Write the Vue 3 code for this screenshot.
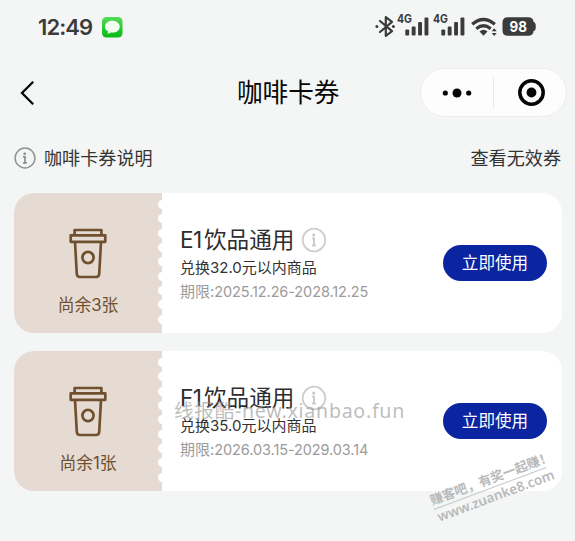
<script setup>
const coupons = [
  { id: 1, left: 3, code: 'E1', value: '32.0', range: '2025.12.26-2028.12.25' },
  { id: 2, left: 1, code: 'F1', value: '35.0', range: '2026.03.15-2029.03.14' },
]
const holes = [0, 1, 2, 3, 4, 5, 6, 7, 8]
</script>

<template>
  <main class="page">
    <header class="status">
      <span class="time">12:49</span>
      <svg class="msg" width="21" height="21" viewBox="0 0 21 21">
        <defs>
          <linearGradient id="green" x1="0" y1="0" x2="0" y2="1">
            <stop offset="0" stop-color="#55dc58" />
            <stop offset="1" stop-color="#08b814" />
          </linearGradient>
        </defs>
        <rect width="20.5" height="20.5" rx="4.5" fill="url(#green)" />
        <path d="M10.3 3.8c-4.200 0-7.300 2.600-7.300 5.900 0 2.100 1.300 3.900 3.300 4.900-.1.800-.5 1.500-1.100 2 1.500 0 2.700-.6 3.500-1.200 5 .8 9-1.800 9-5.700 0-3.300-3.200-5.900-7.400-5.900z" fill="#f4fff4" />
      </svg>
      <svg class="signals" width="167" height="26" viewBox="0 0 167 26">
        <g fill="none" stroke="#3b3b3b" stroke-width="2.200" stroke-linejoin="round" stroke-linecap="round">
          <path d="M5 8l12 10.200-6.200 4.600V4.200l6.200 4.600L5 19" />
        </g>
        <g fill="#3b3b3b">
          <circle cx="1.900" cy="13.500" r="1.500" />
          <circle cx="18.400" cy="13.500" r="1.500" />
          <g v-for="x in [0, 36]" :key="x" :transform="`translate(${x} 0)`">
            <text x="22" y="10.300" class="net" textLength="15" lengthAdjust="spacingAndGlyphs">4G</text>
            <rect x="30.300" y="16.500" width="3.900" height="6" rx="1" />
            <rect x="36.700" y="13.500" width="3.900" height="9" rx="1" />
            <rect x="43.100" y="9" width="3.900" height="13.500" rx="1" />
            <rect x="49.500" y="4.500" width="3.900" height="18" rx="1" />
          </g>
          <path d="M104.500 18.500q4-3.400 8 0l-4 4.300z" />
          <path d="M119.200 15.200l2.500 3h-5zM119.200 23l2.500-3h-5z" />
          <path d="M133 4.300h20q5.500 0 5.500 4.700 2.300 0 2.300 4.500t-2.300 4.500q0 4.800-5.500 4.800h-20q-5.500 0-5.500-5.300V9.500q0-5.200 5.500-5.200z" />
        </g>
        <g fill="none" stroke="#3b3b3b" stroke-width="3.300">
          <path d="M97.200 11.200q11.300-9.400 22.600 0" />
          <path d="M101.300 15.700q7.200-5.800 14.400 0" />
        </g>
        <text x="134.500" y="18.900" class="battery" textLength="17.500" lengthAdjust="spacingAndGlyphs">98</text>
      </svg>
    </header>

    <nav class="nav">
      <svg class="back" width="16" height="28" viewBox="0 0 16 28">
        <path d="M13.200 2.800L2 14l11.200 11.300" fill="none" stroke="#080808" stroke-width="2.300" />
      </svg>
      <h1>咖啡卡券</h1>
      <div class="capsule">
        <svg width="30" height="12" viewBox="0 0 30 12" fill="#050505">
          <circle cx="3.300" cy="6" r="2.600" /><circle cx="15" cy="6" r="4.500" /><circle cx="26.700" cy="6" r="2.600" />
        </svg>
        <i class="divider"></i>
        <svg width="28" height="28" viewBox="0 0 28 28">
          <circle cx="14.500" cy="13.500" r="11.700" fill="none" stroke="#050505" stroke-width="3.500" />
          <circle cx="14.500" cy="13.500" r="4.900" fill="#050505" />
        </svg>
      </div>
    </nav>

    <div class="links">
      <svg width="22" height="22" viewBox="0 0 22 22">
        <circle cx="11" cy="11" r="9.900" fill="none" stroke="#929393" stroke-width="1.500" />
        <circle cx="10.700" cy="6.700" r="1.300" fill="#858686" />
        <path d="M9 9.800h2v6.200M9 16h4" fill="none" stroke="#858686" stroke-width="1.600" />
      </svg>
      <span class="explain">咖啡卡券说明</span>
      <span class="invalid">查看无效券</span>
    </div>

    <section class="list">
      <article v-for="c in coupons" :key="c.id" class="card">
        <div class="stub">
          <svg class="cup" width="38" height="51" viewBox="0 0 38 51" fill="none" stroke="#70502e" stroke-width="2.700" stroke-linejoin="round">
            <path d="M5.600 7V2h26.800v5" />
            <rect x="1.700" y="7.300" width="34.600" height="6.500" />
            <path d="M6 14l1.800 32q.2 3 3.200 3h16q3 0 3.200-3L32 14" />
            <circle cx="19" cy="29.500" r="5.600" />
          </svg>
          <div class="left">尚余<span>{{ c.left }}</span>张</div>
          <div class="perforation"><i v-for="h in holes" :key="h"></i></div>
        </div>
        <div class="info">
          <h2>
            <span class="code">{{ c.code }}</span><span>饮品通用</span>
            <svg width="26" height="26" viewBox="0 0 26 26">
              <circle cx="13" cy="13" r="11.300" fill="none" stroke="#cecece" stroke-width="1.800" />
              <circle cx="12.700" cy="8" r="1.500" fill="#c8c8c8" />
              <path d="M11.200 11.500h1.800v7M11.200 18.500h3.600" fill="none" stroke="#c8c8c8" stroke-width="1.800" />
            </svg>
          </h2>
          <p class="value">兑换<span>{{ c.value }}</span>元以内商品</p>
          <p class="date">期限:<span>{{ c.range }}</span></p>
        </div>
        <button>立即使用</button>
      </article>
    </section>

    <div class="site-mark">线报酷-new.xianbao.fun</div>
    <div class="forum-mark">
      <div class="slogan">赚客吧，有奖一起赚！</div>
      <div class="url">www.zuanke8.com</div>
    </div>
  </main>
</template>

<style>
body { background: #f4f5f5; }
</style>

<style scoped>
* { box-sizing: border-box; }
.page {
  position: relative;
  width: 575px;
  height: 541px;
  overflow: hidden;
  background: #f4f5f5;
  color: #333;
  font-family: Inter, "Noto Sans CJK SC", sans-serif;
}
h1, h2, p { margin: 0; font-weight: 400; }
svg { display: block; flex: none; }
.status { display: flex; align-items: center; height: 54px; padding: 0 34px 0 38px; }
.time { width: 64px; font: 600 22px/30px Inter, sans-serif; letter-spacing: -0.9px; color: #3b3b3b; }
.signals { margin: 0 -1px 2px auto; overflow: visible; }
.net { font: 700 12px Inter, sans-serif; }
.battery { font: 700 15px Inter, sans-serif; fill: #fff; }
.nav { display: flex; align-items: center; height: 77px; padding: 0 8px 0 20px; }
h1 { margin-left: 201px; width: 184px; padding-top: 1px; font-size: 25.6px; line-height: 36px; color: #080808; white-space: nowrap; }
.capsule {
  display: flex;
  align-items: center;
  width: 147px;
  height: 49px;
  padding: 0 21px 0 21px;
  border: 1px solid #ededed;
  border-radius: 25px;
  background: #fdfdfd;
}
.divider { width: 1px; height: 31px; margin: 0 23px 0 21px; background: #e9e9e9; }
.links { display: flex; align-items: center; height: 54px; padding: 0 14px 0 14px; font-size: 18.1px; line-height: 26px; }
.explain { margin-left: 8px; }
.invalid { margin-left: auto; }
.list { display: flex; flex-direction: column; gap: 18px; padding: 8px 13px 0 14px; }
.card { display: flex; align-items: center; height: 140px; border-radius: 20px; background: #fff; overflow: hidden; }
.stub { position: relative; display: flex; flex-direction: column; align-items: center; width: 148px; height: 140px; padding-top: 35px; background: #e5dbd3; }
.left { margin-top: 14px; font-size: 16.8px; line-height: 24px; color: #70502e; }
.perforation { position: absolute; top: 7px; right: -4.500px; display: flex; flex-direction: column; gap: 5.330px; }
.perforation i { width: 9px; height: 9px; border-radius: 50%; background: #fff; }
.info { width: 281px; padding: 2px 0 0 18px; white-space: nowrap; }
h2 { display: flex; align-items: center; height: 30px; font-size: 22.600px; line-height: 30px; color: #2d2d2d; font-weight: 400; }
.code { width: 24px; letter-spacing: -0.5px; }
h2 svg { margin-left: 7px; }
.value { height: 24px; margin-top: 1px; font-size: 15px; line-height: 24px; }
.date { height: 24px; font-size: 15px; line-height: 23px; color: #9b9b9b; }
.date span { font-size: 14.500px; letter-spacing: -0.1px; }
button {
  width: 104px;
  height: 36px;
  padding: 0;
  border: 0;
  border-radius: 18px;
  background: #0b249f;
  color: #fff;
  font-family: inherit;
  font-size: 16.600px;
  line-height: 36px;
}
.site-mark {
  position: absolute;
  left: 174px;
  top: 399px;
  font: 19.600px/24px "Noto Sans", "Noto Sans CJK SC", sans-serif;
  letter-spacing: 0.720px;
  color: rgba(145, 145, 145, 0.600);
  white-space: nowrap;
}
.forum-mark {
  position: absolute;
  left: 430px;
  top: 471px;
  width: 120px;
  transform: rotate(-20.500deg);
  color: #b9b9b9;
  font-family: "Noto Sans", "Noto Sans CJK SC", sans-serif;
  font-weight: 700;
  white-space: nowrap;
}
.slogan { height: 18px; border-bottom: 1px solid #c5c5c5; font-size: 12.900px; line-height: 16px; }
.url { padding-left: 1px; font-size: 13.500px; font-weight: 600; line-height: 17px; }
</style>
